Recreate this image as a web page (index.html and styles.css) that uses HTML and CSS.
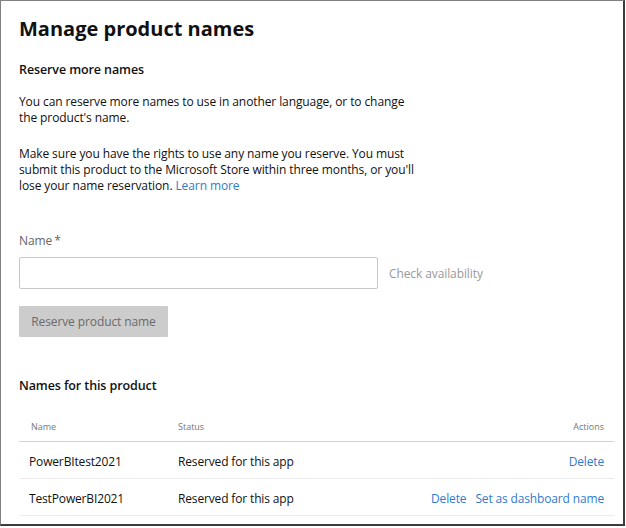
FILE: index.html
```html
<!DOCTYPE html>
<html>
<head>
<meta charset="utf-8">
<link rel="stylesheet" href="styles.css">
</head>
<body>
<div class="frame">
  <h1 class="title">Manage product names</h1>
  <h2 class="subtitle">Reserve more names</h2>
  <p class="para para-first">You can reserve more names to use in another language, or to change<br>the product's name.</p>
  <p class="para para-second">Make sure you have the rights to use any name you reserve. You must<br>submit this product to the Microsoft Store within three months, or you'll<br>lose your name reservation. <a class="link" href="#">Learn more</a></p>
  <label class="label">Name<span class="req">*</span></label>
  <div class="input-row">
    <input class="input" type="text">
    <span class="check">Check availability</span>
  </div>
  <button class="btn">Reserve product name</button>
  <h2 class="subtitle names-title">Names for this product</h2>
  <div class="table">
    <div class="row head">
      <div class="c1">Name</div>
      <div class="c2">Status</div>
      <div class="c3">Actions</div>
    </div>
    <div class="row">
      <div class="c1">PowerBItest2021</div>
      <div class="c2">Reserved for this app</div>
      <div class="c3"><a class="link" href="#">Delete</a></div>
    </div>
    <div class="row">
      <div class="c1">TestPowerBI2021</div>
      <div class="c2">Reserved for this app</div>
      <div class="c3"><a class="link" href="#">Delete</a><a class="link" href="#">Set as dashboard name</a></div>
    </div>
  </div>
</div>
</body>
</html>
```
FILE: styles.css
```css
html, body {
  margin: 0;
  padding: 0;
  background: #fff;
}
body {
  font-family: "Open Sans", "Noto Sans", sans-serif;
  color: #111;
}
.frame {
  box-sizing: border-box;
  width: 625px;
  height: 526px;
  border-top: 1px solid #808080;
  border-left: 1px solid #808080;
  border-right: 2px solid #3c3c3c;
  border-bottom: 2px solid #3c3c3c;
  padding: 0 10px 0 18px;
  overflow: hidden;
}
.title {
  font-size: 20px;
  font-weight: 700;
  line-height: 26px;
  margin: 15px 0 0;
  letter-spacing: 0;
}
.subtitle {
  font-size: 12.5px;
  font-weight: 600;
  line-height: 18px;
  margin: 19px 0 0;
  letter-spacing: -0.1px;
}
.para {
  font-size: 12px;
  line-height: 16px;
  margin: 15px 0 0;
  letter-spacing: -0.1px;
}
.para-second {
  margin-top: 20px;
}
.link {
  color: #2f7bcf;
  text-decoration: none;
}
.label {
  display: block;
  margin-top: 39px;
  font-size: 12px;
  line-height: 16px;
  color: #666;
  letter-spacing: -0.1px;
}
.req {
  margin-left: 2px;
}
.input-row {
  display: flex;
  align-items: center;
  margin-top: 8px;
}
.input {
  box-sizing: border-box;
  width: 359px;
  height: 32px;
  border: 1px solid #c8c8c8;
  border-radius: 2px;
  margin: 0;
}
.check {
  margin-left: 11px;
  font-size: 12px;
  color: #999;
  letter-spacing: -0.1px;
}
.btn {
  display: block;
  margin-top: 17px;
  height: 31px;
  width: 149px;
  border: none;
  border-radius: 1px;
  background: #cccccc;
  color: #6a6a6a;
  font-family: inherit;
  font-size: 12px;
  letter-spacing: -0.1px;
  padding: 0;
}
.names-title {
  margin-top: 40px;
}
.table {
  margin-top: 16px;
  width: 595px;
}
.row {
  box-sizing: border-box;
  display: grid;
  grid-template-columns: 149px 1fr auto;
  align-items: center;
  height: 37px;
  padding: 2px 10px 0 10px;
  border-bottom: 1px solid #ececec;
  font-size: 12px;
  letter-spacing: -0.15px;
}
.row.head {
  height: 31px;
  padding-top: 0;
  border-bottom: 1px solid #d2d2d2;
  font-size: 9px;
  color: #777;
  letter-spacing: 0;
}
.row.head .c1 { padding-left: 2px; }
.c3 {
  display: flex;
  gap: 9px;
  justify-content: flex-end;
}
```
